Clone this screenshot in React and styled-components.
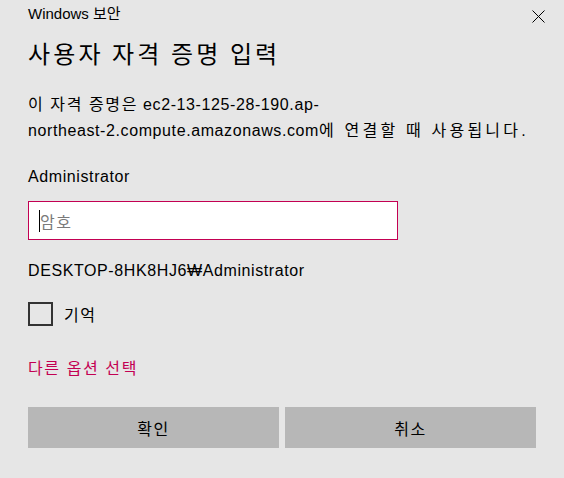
import styled, { createGlobalStyle } from 'styled-components';

const GlobalStyle = createGlobalStyle`
  html, body {
    margin: 0;
    padding: 0;
    background: #e6e6e6;
  }
  body {
    font-family: "Liberation Sans", "Noto Sans CJK KR", sans-serif;
    color: #000;
  }
`;

// Korean glyphs in the original (Malgun Gothic) sit wider than Noto CJK
const Ko = styled.span`
  letter-spacing: ${(p) => p.spacing || '0.1em'};
`;

const Dialog = styled.div`
  width: 564px;
  height: 478px;
  box-sizing: border-box;
  padding: 0 28px;
  background: #e6e6e6;
  overflow: hidden;
`;

const TitleBar = styled.div`
  display: flex;
  align-items: flex-start;
  justify-content: space-between;
  height: 30px;
  padding-top: 4px;
  box-sizing: border-box;
  margin-right: -14px;
`;

const AppName = styled.span`
  font-size: 15px;
  line-height: 20px;
`;

const CloseButton = styled.button`
  display: flex;
  align-items: center;
  justify-content: center;
  width: 24px;
  height: 24px;
  padding: 0;
  border: 0;
  background: transparent;
  cursor: pointer;
`;

const Heading = styled.h1`
  margin: 6px 0 0;
  font-size: 24px;
  font-weight: 400;
  line-height: 34px;
  letter-spacing: 0.13em;
  font-family: "Noto Sans CJK KR", sans-serif;
`;

const Text = styled.p`
  margin: ${(p) => p.margin || '0'};
  font-size: 16px;
  line-height: 26px;
  letter-spacing: 0.6px;
  color: ${(p) => p.color || '#000'};
`;

const Field = styled.div`
  display: flex;
  align-items: center;
  width: 370px;
  height: 39px;
  box-sizing: border-box;
  margin-top: 11px;
  padding-left: 10px;
  border: 1px solid #c30052;
  background: #fff;
`;

const Caret = styled.span`
  width: 1px;
  height: 22px;
  background: #000;
`;

const Placeholder = styled.span`
  font-size: 16px;
  letter-spacing: 1.5px;
  color: #7a7a7a;
`;

const CheckRow = styled.label`
  display: flex;
  align-items: center;
  gap: 11px;
  margin-top: 18px;
  font-size: 16px;
  letter-spacing: 1.5px;
  cursor: pointer;
`;

const Box = styled.span`
  width: 25px;
  height: 24px;
  box-sizing: border-box;
  border: 2px solid #333;
`;

const Link = styled.a`
  display: block;
  margin-top: 30px;
  font-size: 16px;
  line-height: 26px;
  letter-spacing: 0.1em;
  color: #c30052;
  text-decoration: none;
  cursor: pointer;
`;

const Buttons = styled.div`
  display: grid;
  grid-template-columns: 1fr 1fr;
  gap: 6px;
  margin-top: 25px;
`;

const Button = styled.button`
  height: 41px;
  border: 0;
  background: #b7b7b7;
  font-family: "Liberation Sans", "Noto Sans CJK KR", sans-serif;
  font-size: 16px;
  letter-spacing: 0.1em;
  color: #000;
  cursor: pointer;
`;

export default function App() {
  return (
    <>
      <GlobalStyle />
      <Dialog>
        <TitleBar>
          <AppName>Windows 보안</AppName>
          <CloseButton aria-label="닫기">
            <svg width="13" height="13" viewBox="0 0 13 13">
              <path d="M0.5 0.5 L12.5 12.5 M12.5 0.5 L0.5 12.5" stroke="#000" strokeWidth="1" />
            </svg>
          </CloseButton>
        </TitleBar>
        <Heading>사용자 자격 증명 입력</Heading>
        <Text margin="22px 0 0">
          <Ko>이 자격 증명은</Ko> ec2-13-125-28-190.ap-
          <br />
          northeast-2.compute.amazonaws.com<Ko spacing="0.2em">에 연결할 때 사용됩니다.</Ko>
        </Text>
        <Text margin="20px 0 0">Administrator</Text>
        <Field>
          <Caret />
          <Placeholder>암호</Placeholder>
        </Field>
        <Text margin="18px 0 0">DESKTOP-8HK8HJ6₩Administrator</Text>
        <CheckRow>
          <Box />
          기억
        </CheckRow>
        <Link>다른 옵션 선택</Link>
        <Buttons>
          <Button>확인</Button>
          <Button>취소</Button>
        </Buttons>
      </Dialog>
    </>
  );
}
